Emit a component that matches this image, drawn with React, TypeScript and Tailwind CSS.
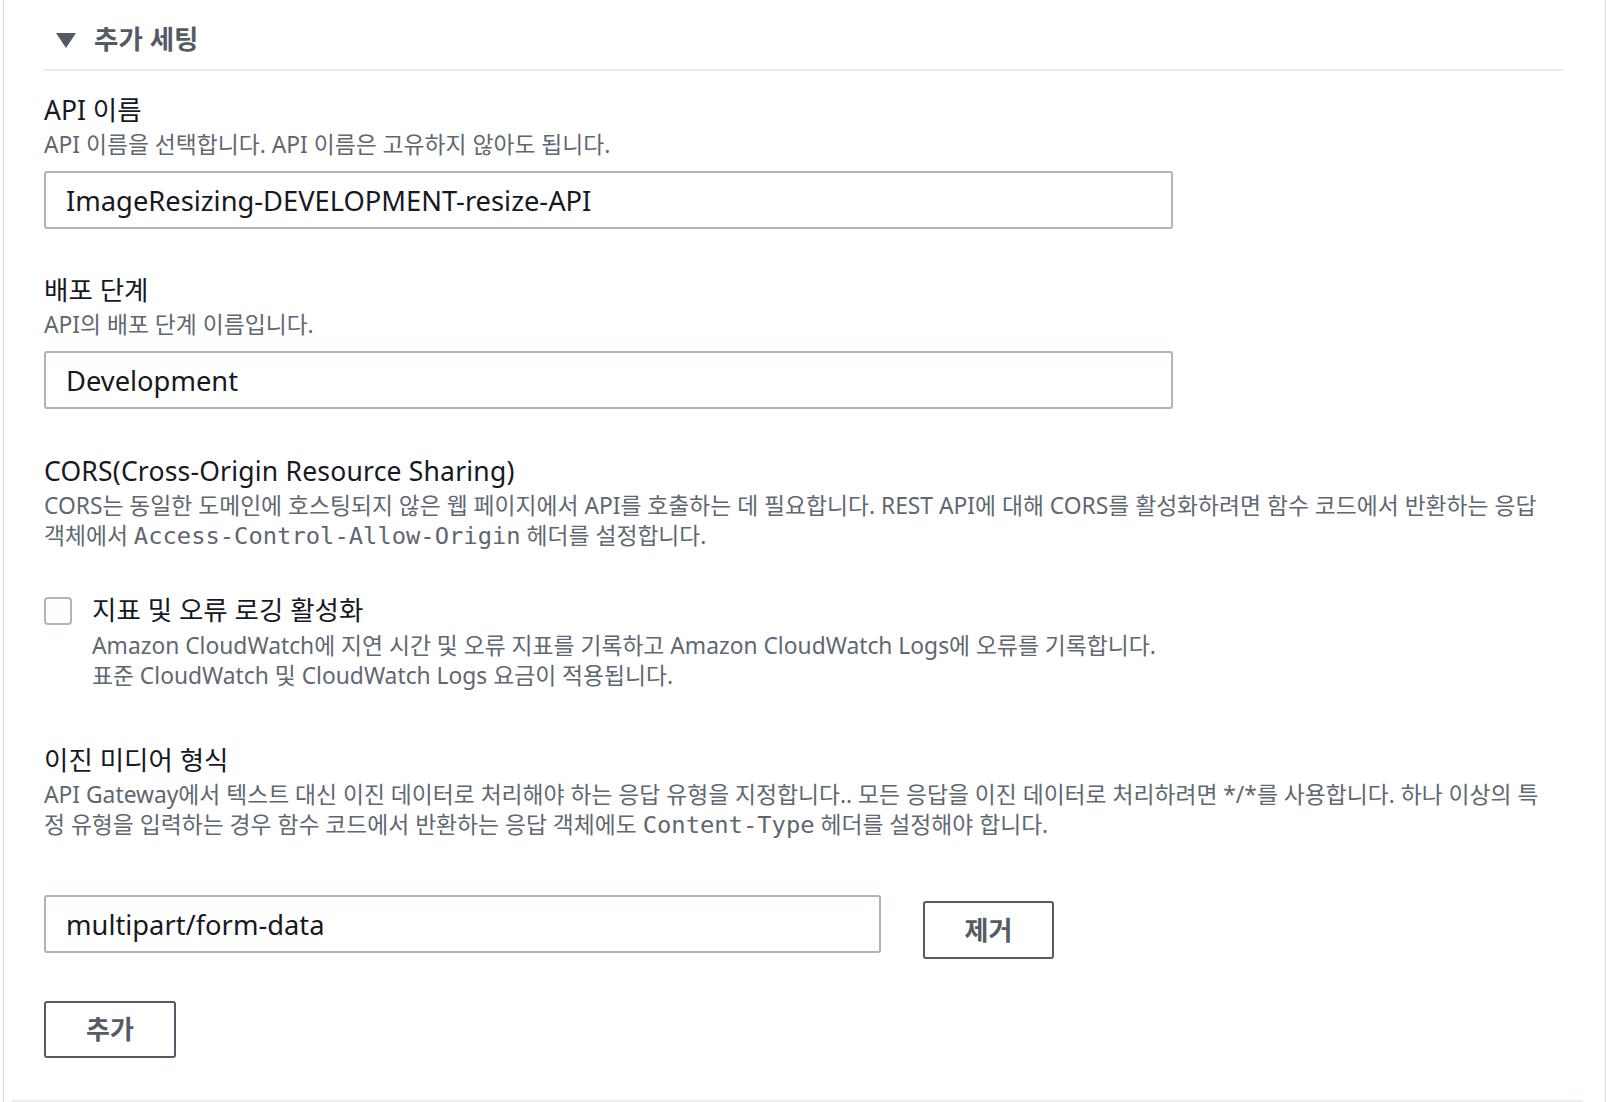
import React from 'react';

const font = { fontFamily: '"Noto Sans", "Noto Sans CJK KR", sans-serif' };
const mono = 'font-["DejaVu_Sans_Mono",monospace] text-[23.8px]';

function Label({ children }: { children: React.ReactNode }) {
  return <div className="pt-px text-[26.5px] leading-[32px] text-[#16191f]">{children}</div>;
}

function Desc({ children, className = '' }: { children: React.ReactNode; className?: string }) {
  return <div className={`mt-[4px] text-[22.8px] leading-[30px] text-[#5f6770] ${className}`}>{children}</div>;
}

function TextInput({ value, width }: { value: string; width: string }) {
  return (
    <input
      readOnly
      value={value}
      className={`${width} h-[58px] rounded-[3px] border-2 border-[#aab7b8] bg-white px-[20px] text-[27.3px] text-[#16191f] outline-none`}
    />
  );
}

function OutlineButton({ label, className = '' }: { label: string; className?: string }) {
  return (
    <button className={`h-[58px] w-[131px] rounded-[3px] border-2 border-[#545b64] bg-white text-[26px] font-bold text-[#545b64] ${className}`}>
      {label}
    </button>
  );
}

export default function App() {
  return (
    <div className="w-[1606px] h-[1102px] overflow-hidden bg-white pl-[3px]" style={font}>
      <div className="flex h-full flex-col border-x border-[#d5dbdb]">
        <div className="pl-[40px] pr-[42px]">
          {/* section header */}
          <div className="mt-[24px] flex h-[32px] items-center">
            <svg width="20" height="15" viewBox="0 0 20 15" className="ml-[12px]">
              <polygon points="0,0 20,0 10,15" fill="#545b64" />
            </svg>
            <span className="ml-[18px] text-[26.5px] font-bold text-[#545b64]">추가 세팅</span>
          </div>
          <div className="mt-[13px] h-[2px] bg-[#eaeded]" />

          <div className="mt-[22px]">
            <Label>API 이름</Label>
            <Desc>API 이름을 선택합니다. API 이름은 고유하지 않아도 됩니다.</Desc>
            <div className="mt-[11px]">
              <TextInput value="ImageResizing-DEVELOPMENT-resize-API" width="w-[1129px]" />
            </div>
          </div>

          <div className="mt-[44px]">
            <Label>배포 단계</Label>
            <Desc>API의 배포 단계 이름입니다.</Desc>
            <div className="mt-[11px]">
              <TextInput value="Development" width="w-[1129px]" />
            </div>
          </div>

          <div className="mt-[45px]">
            <Label>
              <span className="tracking-[0.2px]">CORS(Cross-Origin Resource Sharing)</span>
            </Label>
            <Desc>
              CORS는 동일한 도메인에 호스팅되지 않은 웹 페이지에서 API를 호출하는 데 필요합니다. REST API에 대해 CORS를 활성화하려면 함수 코드에서 반환하는 응답
              <br />
              객체에서 <span className={mono}>Access-Control-Allow-Origin</span> 헤더를 설정합니다.
            </Desc>
          </div>

          <div className="mt-[42px] flex items-start gap-[20px]">
            <div className="mt-[4px] h-[28px] w-[28px] shrink-0 rounded-[4px] border-2 border-[#aab7b8] bg-white" />
            <div>
              <Label>지표 및 오류 로깅 활성화</Label>
              <Desc className="mt-[5px]">
                Amazon CloudWatch에 지연 시간 및 오류 지표를 기록하고 Amazon CloudWatch Logs에 오류를 기록합니다.
                <br />
                표준 CloudWatch 및 CloudWatch Logs 요금이 적용됩니다.
              </Desc>
            </div>
          </div>

          <div className="mt-[52px]">
            <Label>이진 미디어 형식</Label>
            <Desc>
              API Gateway에서 텍스트 대신 이진 데이터로 처리해야 하는 응답 유형을 지정합니다.. 모든 응답을 이진 데이터로 처리하려면 */*를 사용합니다. 하나 이상의 특
              <br />
              정 유형을 입력하는 경우 함수 코드에서 반환하는 응답 객체에도 <span className={mono}>Content-Type</span> 헤더를 설정해야 합니다.
            </Desc>
          </div>

          <div className="mt-[55px] flex items-start">
            <TextInput value="multipart/form-data" width="w-[837px]" />
            <OutlineButton label="제거" className="ml-[42px] mt-[6px]" />
          </div>

          <OutlineButton label="추가" className="mt-[42px] !h-[57px] !w-[132px]" />
        </div>

        <div className="ml-[8px] mr-[22px] mt-auto h-[2px] bg-[#eaeded]" />
      </div>
    </div>
  );
}
